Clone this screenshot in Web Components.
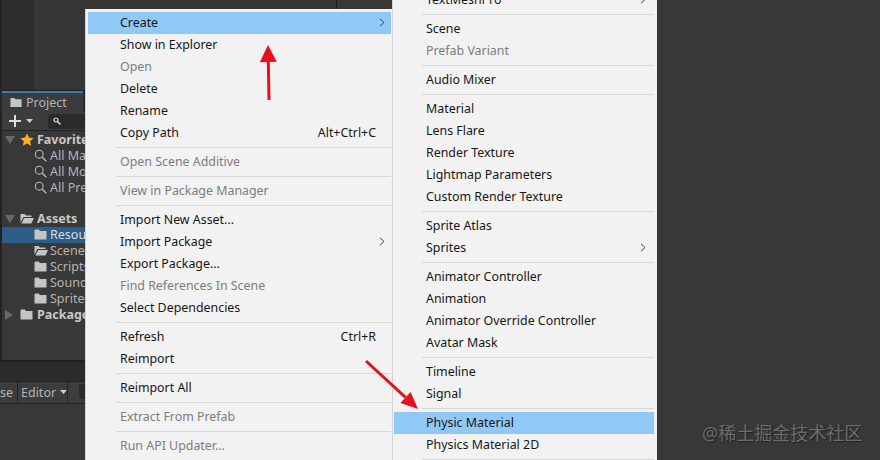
<!DOCTYPE html>
<html>
<head>
<meta charset="utf-8">
<title>Create Physic Material</title>
<style>
  html, body { margin: 0; padding: 0; background: #383838; }
</style>
</head>
<body>
<unity-desktop>
  <project-panel slot="panel"></project-panel>
  <ctx-menu slot="menus" style="left:85px;top:9px;width:307px;--ar:6px;--start:2px;--end:1px">
    <menu-item active arrow>Create</menu-item>
    <menu-item>Show in Explorer</menu-item>
    <menu-item disabled>Open</menu-item>
    <menu-item>Delete</menu-item>
    <menu-item>Rename</menu-item>
    <menu-item shortcut="Alt+Ctrl+C">Copy Path</menu-item>
    <menu-sep></menu-sep>
    <menu-item disabled>Open Scene Additive</menu-item>
    <menu-sep></menu-sep>
    <menu-item disabled>View in Package Manager</menu-item>
    <menu-sep></menu-sep>
    <menu-item>Import New Asset...</menu-item>
    <menu-item arrow>Import Package</menu-item>
    <menu-item>Export Package...</menu-item>
    <menu-item disabled>Find References In Scene</menu-item>
    <menu-item>Select Dependencies</menu-item>
    <menu-sep></menu-sep>
    <menu-item shortcut="Ctrl+R">Refresh</menu-item>
    <menu-item>Reimport</menu-item>
    <menu-sep></menu-sep>
    <menu-item>Reimport All</menu-item>
    <menu-sep></menu-sep>
    <menu-item disabled>Extract From Prefab</menu-item>
    <menu-sep></menu-sep>
    <menu-item disabled>Run API Updater...</menu-item>
    <menu-sep></menu-sep>
  </ctx-menu>
  <ctx-menu slot="menus" style="left:392px;top:-14px;width:265px;--ar:8px;--start:1px;--end:3px">
    <menu-item arrow>TextMeshPro</menu-item>
    <menu-sep></menu-sep>
    <menu-item>Scene</menu-item>
    <menu-item disabled>Prefab Variant</menu-item>
    <menu-sep></menu-sep>
    <menu-item>Audio Mixer</menu-item>
    <menu-sep></menu-sep>
    <menu-item>Material</menu-item>
    <menu-item>Lens Flare</menu-item>
    <menu-item>Render Texture</menu-item>
    <menu-item>Lightmap Parameters</menu-item>
    <menu-item>Custom Render Texture</menu-item>
    <menu-sep></menu-sep>
    <menu-item>Sprite Atlas</menu-item>
    <menu-item arrow>Sprites</menu-item>
    <menu-sep></menu-sep>
    <menu-item>Animator Controller</menu-item>
    <menu-item>Animation</menu-item>
    <menu-item>Animator Override Controller</menu-item>
    <menu-item>Avatar Mask</menu-item>
    <menu-sep></menu-sep>
    <menu-item>Timeline</menu-item>
    <menu-item>Signal</menu-item>
    <menu-sep></menu-sep>
    <menu-item active>Physic Material</menu-item>
    <menu-item>Physics Material 2D</menu-item>
    <menu-sep></menu-sep>
  </ctx-menu>
  <red-arrow slot="menus" style="left:250px;top:40px" x1="19" y1="60" x2="18" y2="5" len="17" half="8.5"></red-arrow>
  <red-arrow slot="menus" style="left:360px;top:355px" x1="6" y1="6" x2="58" y2="54" len="17" half="7.5"></red-arrow>
  <span slot="menus" style="position:absolute;left:702px;top:419px;font:18px 'Noto Sans','Noto Sans CJK SC',sans-serif;color:#6b6b6b;white-space:nowrap;text-shadow:1px 1px 1px #222">@稀土掘金技术社区</span>
</unity-desktop>

<script>
const ICONS = {
  folder: '<svg width="13" height="11" viewBox="0 0 13 11"><path fill="#c4c4c4" d="M.5 1.5q0-1 1-1h3.2l1.3 1.5h6.5v8q0 .5-.5.5H1q-.5 0-.5-.5z"/></svg>',
  open: '<svg width="14" height="11" viewBox="0 0 14 11"><path fill="#c4c4c4" d="M.5 1h4.2L6 2.5h5.5V4H3.5L.5 9.5zM4.2 5H14l-2.6 5.5H1.3z"/></svg>',
  search: '<svg width="13" height="13" viewBox="0 0 13 13"><circle cx="5.2" cy="5.2" r="3.9" fill="none" stroke="#b8b8b8" stroke-width="1.1"/><path d="M8 8l4.3 4.3" stroke="#b8b8b8" stroke-width="1.4"/></svg>',
  star: '<svg width="14" height="13" viewBox="0 0 14 13"><path fill="#f6b32a" d="M7 .5l2 4.1 4.6.6-3.4 3.1.9 4.5L7 10.6l-4.1 2.2.9-4.5L.4 5.2 5 4.6z"/></svg>',
  down: '<svg width="10" height="8" viewBox="0 0 10 8"><path fill="#6a6a6a" d="M0 0h10L5 8z"/></svg>',
  right: '<svg width="8" height="10" viewBox="0 0 8 10"><path fill="#6a6a6a" d="M0 0l8 5-8 5z"/></svg>',
};

class UnityDesktop extends HTMLElement {
  connectedCallback() {
    this.attachShadow({ mode: 'open' }).innerHTML = `
      <style>
        :host { display: block; position: relative; width: 880px; height: 460px; overflow: hidden; background: #383838; }
        .top { height: 90px; display: flex; background: #383838; }
        .top .side { width: 31px; background: #2d2d2d; border-left: 2px solid #232323; border-right: 1px solid #292929; }
        .top .mid { width: 302px; border-right: 1px solid #1e1e1e; background: #363636; }
      </style>
      <div class="top"><div class="side"></div><div class="mid"></div></div>
      <slot name="panel"></slot>
      <slot name="menus"></slot>
    `;
  }
}

class ProjectPanel extends HTMLElement {
  connectedCallback() {
    this.attachShadow({ mode: 'open' }).innerHTML = `
      <style>
        :host { display: block; width: 200px; font: 12.5px "Noto Sans", sans-serif; color: #b4b4b4; }
        .tabs { height: 22px; background: #292929; border-top: 1px solid #222; box-sizing: border-box; display: flex; padding-left: 2px; }
        .tab { width: 81px; box-sizing: border-box; background: #3c3c3c; border-top: 2px solid #3a78b4; display: flex; align-items: center; gap: 4px; padding: 0 0 0 8px; }
        .tab svg { width: 12px; }
        .tools { height: 18px; background: #3c3c3c; border-left: 2px solid #222; border-bottom: 1px solid #222; display: flex; align-items: center; padding-left: 7px; }
        .tools .arrow { margin: 0 15px 0 5px; }
        .search { flex: 1; height: 15px; border-radius: 4px 0 0 4px; background: #2a2a2a; display: flex; align-items: center; padding-left: 5px; }
        .tree { background: #383838; height: 231px; box-sizing: border-box; padding-top: 1px; overflow: hidden; border-left: 2px solid #222; border-bottom: 2px solid #222; }
        .bar { height: 19px; background: #2b2b2b; }
        .foot { height: 21px; background: #3c3c3c; display: flex; border-top: 1px solid #222; border-bottom: 1px solid #222; }
        .foot span { display: flex; align-items: center; height: 21px; box-sizing: border-box; border-right: 1px solid #222; padding-bottom: 1px; }
        .foot .se { width: 18px; justify-content: flex-end; padding-right: 4px; }
        .foot .ed { width: 50px; padding-left: 3px; gap: 4px; }
        .pill { width: 12px; height: 15px; margin: 2px 0 0 11px; background: #2b2b2b; border-radius: 3px 0 0 3px; }
      </style>
      <div class="tabs"><div class="tab">${ICONS.folder}<span>Project</span></div></div>
      <div class="tools">
        <svg width="12" height="12" viewBox="0 0 12 12"><path fill="#dcdcdc" d="M5 0h2v5h5v2H7v5H5V7H0V5h5z"/></svg>
        <svg class="arrow" width="7" height="4" viewBox="0 0 7 4"><path fill="#cfcfcf" d="M0 0h7L3.5 4z"/></svg>
        <div class="search"><svg width="8" height="8" viewBox="0 0 8 8"><circle cx="3" cy="3" r="2" fill="none" stroke="#ddd" stroke-width="1.2"/><path d="M4.5 4.5L7.5 7.5" stroke="#ddd" stroke-width="1.5"/></svg></div>
      </div>
      <div class="tree">
        <tree-row depth="0" caret="down" bold icon="star">Favorites</tree-row>
        <tree-row depth="1" icon="search">All Materials</tree-row>
        <tree-row depth="1" icon="search">All Models</tree-row>
        <tree-row depth="1" icon="search">All Prefabs</tree-row>
        <tree-row gap></tree-row>
        <tree-row depth="0" caret="down" bold icon="open">Assets</tree-row>
        <tree-row depth="1" icon="folder" selected>Resources</tree-row>
        <tree-row depth="1" icon="open">Scenes</tree-row>
        <tree-row depth="1" icon="folder">Scripts</tree-row>
        <tree-row depth="1" icon="folder">Sounds</tree-row>
        <tree-row depth="1" icon="folder">Sprites</tree-row>
        <tree-row depth="0" caret="right" bold icon="folder">Packages</tree-row>
      </div>
      <div class="bar"></div>
      <div class="foot"><span class="se">se</span><span class="ed">Editor <svg width="7" height="4" viewBox="0 0 7 4"><path fill="#cfcfcf" d="M0 0h7L3.5 4z"/></svg></span><div class="pill"></div></div>
    `;
  }
}

class TreeRow extends HTMLElement {
  connectedCallback() {
    const depth = +this.getAttribute('depth') || 0;
    const caret = this.getAttribute('caret');
    const icon = this.getAttribute('icon');
    this.attachShadow({ mode: 'open' }).innerHTML = `
      <style>
        :host { display: flex; align-items: center; height: 16px; box-sizing: border-box; padding-bottom: 1px; white-space: nowrap; overflow: hidden; }
        :host([selected]) { background: #2c5d87; color: #dcdcdc; }
        :host([bold]) { font-weight: 700; color: #c8c8c8; }
        :host([gap]) { height: 15px; }
        .c { width: 15px; margin-left: 3px; display: flex; flex: none; }
        .i { display: flex; width: 14px; margin-right: ${depth ? 2 : 3}px; flex: none; }
      </style>
      ${this.hasAttribute('gap') ? '' : `
      <span style="width:${depth * 14}px;flex:none"></span>
      <span class="c">${caret ? ICONS[caret] : ''}</span>
      <span class="i">${ICONS[icon] || ''}</span>
      <slot></slot>`}
    `;
  }
}

class CtxMenu extends HTMLElement {
  connectedCallback() {
    this.attachShadow({ mode: 'open' }).innerHTML = `
      <style>
        :host { display: block; position: absolute; box-sizing: border-box; background: #f2f2f2; border-left: 1px solid #d2d2d2; padding: 3px var(--end) 0 var(--start); font: 12.4px "Noto Sans", sans-serif; }
      </style>
      <slot></slot>
    `;
  }
}

class MenuItem extends HTMLElement {
  connectedCallback() {
    const sc = this.getAttribute('shortcut');
    this.attachShadow({ mode: 'open' }).innerHTML = `
      <style>
        :host { display: flex; align-items: center; height: 22px; box-sizing: border-box; padding: 0 0 2px 32px; color: #171717; white-space: nowrap; }
        :host([disabled]) { color: #7d7d7d; }
        :host([active]) { background: #90c8f6; }
        .sc { margin-left: auto; margin-right: 15px; }
        .ar { margin-left: auto; margin-right: var(--ar); display: flex; }
      </style>
      <slot></slot>
      ${sc ? `<span class="sc">${sc}</span>` : ''}
      ${this.hasAttribute('arrow') ? '<span class="ar"><svg width="6" height="9" viewBox="0 0 6 9"><path d="M1 .8L5 4.5 1 8.2" fill="none" stroke="#444" stroke-width="1"/></svg></span>' : ''}
    `;
  }
}

class MenuSep extends HTMLElement {
  connectedCallback() {
    this.attachShadow({ mode: 'open' }).innerHTML = `
      <style>
        :host { display: block; height: 7px; padding: 3px 0 3px 28px; box-sizing: border-box; }
        div { height: 1px; background: #d7d7d7; }
      </style>
      <div></div>
    `;
  }
}

class RedArrow extends HTMLElement {
  connectedCallback() {
    const [x1, y1, x2, y2, len, half] = ['x1', 'y1', 'x2', 'y2', 'len', 'half'].map(a => +this.getAttribute(a));
    const a = Math.atan2(y2 - y1, x2 - x1);
    const bx = x2 - Math.cos(a) * len, by = y2 - Math.sin(a) * len;
    const nx = -Math.sin(a) * half, ny = Math.cos(a) * half;
    this.attachShadow({ mode: 'open' }).innerHTML = `
      <style>:host { display: block; position: absolute; width: 70px; height: 70px; } svg { display: block; }</style>
      <svg width="70" height="70">
        <line x1="${x1}" y1="${y1}" x2="${bx}" y2="${by}" stroke="#e8101f" stroke-width="3"/>
        <polygon fill="#e8101f" points="${x2},${y2} ${bx + nx},${by + ny} ${bx - nx},${by - ny}"/>
      </svg>
    `;
  }
}

customElements.define('unity-desktop', UnityDesktop);
customElements.define('project-panel', ProjectPanel);
customElements.define('tree-row', TreeRow);
customElements.define('ctx-menu', CtxMenu);
customElements.define('menu-item', MenuItem);
customElements.define('menu-sep', MenuSep);
customElements.define('red-arrow', RedArrow);
</script>
</body>
</html>
